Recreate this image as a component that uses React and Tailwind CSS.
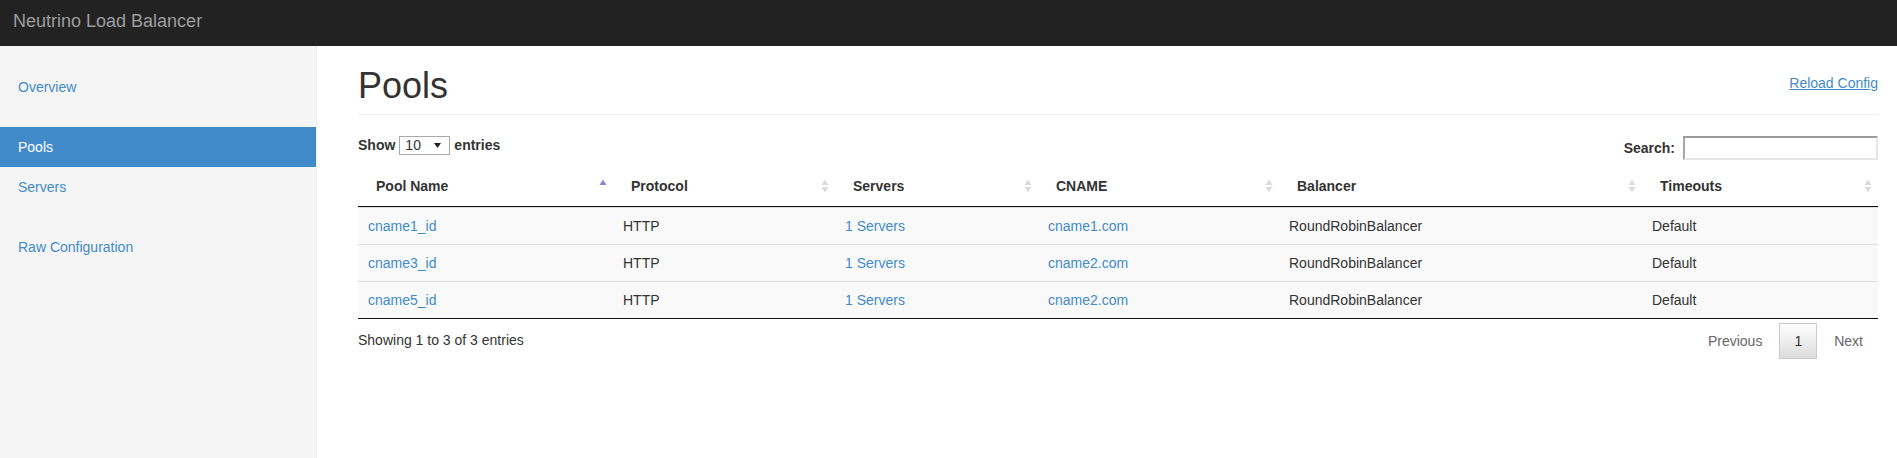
import React from "react";

const pools = [
  { name: "cname1_id", protocol: "HTTP", servers: "1 Servers", cname: "cname1.com", balancer: "RoundRobinBalancer", timeouts: "Default" },
  { name: "cname3_id", protocol: "HTTP", servers: "1 Servers", cname: "cname2.com", balancer: "RoundRobinBalancer", timeouts: "Default" },
  { name: "cname5_id", protocol: "HTTP", servers: "1 Servers", cname: "cname2.com", balancer: "RoundRobinBalancer", timeouts: "Default" },
];

const columns = [
  { label: "Pool Name", width: 255, sort: "asc" },
  { label: "Protocol", width: 222 },
  { label: "Servers", width: 203 },
  { label: "CNAME", width: 241 },
  { label: "Balancer", width: 363 },
  { label: "Timeouts", width: 236 },
];

// sort arrows drawn like the datatables png sprites
const SortIcon = ({ dir }) => (
  <svg width="8" height="14" viewBox="0 0 8 14" className="absolute right-[6px] top-[13px]">
    {dir === "asc" ? (
      <polygon points="4,0.5 7.5,6 0.5,6" fill="#8585d6" />
    ) : (
      <>
        <polygon points="4,0.5 7.5,6 0.5,6" fill="#dadada" />
        <polygon points="0.5,8 7.5,8 4,13.5" fill="#dadada" />
      </>
    )}
  </svg>
);

const SideLink = ({ children, active }) => (
  <a
    href="#"
    className={
      active
        ? "block px-[18px] py-[10px] leading-5 bg-[#428bca] text-white"
        : "block px-[18px] py-[10px] leading-5 text-[#428bca]"
    }
  >
    {children}
  </a>
);

export default function App() {
  return (
    <div className="h-screen flex flex-col text-[14px] text-[#333] bg-white" style={{ fontFamily: '"Liberation Sans", Arial, sans-serif' }}>
      {/* top navbar */}
      <div className="h-[46px] shrink-0 bg-[#222] pl-[13px] pt-[11px]">
        <span className="text-[18px] leading-5 text-[#9d9d9d]">Neutrino Load Balancer</span>
      </div>

      <div className="flex flex-1 min-h-0">
        {/* sidebar */}
        <div className="w-[317px] shrink-0 bg-[#f5f5f5] border-r border-[#eee] pt-[21px]">
          <div className="mb-5">
            <SideLink>Overview</SideLink>
          </div>
          <div className="mb-5">
            <SideLink active>Pools</SideLink>
            <SideLink>Servers</SideLink>
          </div>
          <div>
            <SideLink>Raw Configuration</SideLink>
          </div>
        </div>

        {/* main */}
        <div className="flex-1 pl-[41px] pr-[19px] pt-5">
          <div className="flex justify-between items-start pb-2 border-b border-[#eee] mb-5">
            <h1 className="text-[36px] leading-[40px] font-normal">Pools</h1>
            <a href="#" className="mt-[7px] leading-5 text-[#428bca] underline">Reload Config</a>
          </div>

          <div className="flex justify-between items-start h-[25px]">
            <div className="flex items-center h-5 font-bold">
              <span>Show</span>
              <div className="mx-[4px] w-[51px] h-[19px] border border-[#a9a9a9] bg-white flex items-center justify-between pl-[5px] pr-[8px] font-normal">
                <span className="leading-4">10</span>
                <svg width="7" height="5" viewBox="0 0 7 5">
                  <polygon points="0,0 7,0 3.5,5" fill="#222" />
                </svg>
              </div>
              <span>entries</span>
            </div>
            <div className="flex items-start font-bold">
              <span className="mt-[3px] leading-5">Search:</span>
              <input
                type="text"
                className="ml-[8px] mt-px w-[195px] h-[24px] bg-white border-2 border-t-[#9b9b9b] border-l-[#a6a6a6] border-r-[#e6e6e6] border-b-[#e6e6e6] outline-none"
              />
            </div>
          </div>

          <table className="mt-[6px] w-full table-fixed border-separate border-spacing-0">
            <colgroup>
              {columns.map((c) => (
                <col key={c.label} style={{ width: c.width }} />
              ))}
            </colgroup>
            <thead>
              <tr>
                {columns.map((c) => (
                  <th key={c.label} className="relative text-left font-bold pl-[18px] pr-[18px] py-[10px] leading-5 border-b border-[#111]">
                    {c.label}
                    <SortIcon dir={c.sort} />
                  </th>
                ))}
              </tr>
            </thead>
            <tbody>
              {pools.map((p) => (
                <tr key={p.name} className="bg-[#f9f9f9]">
                  <td className="px-[10px] py-[8px] leading-5 border-t border-[#ddd]">
                    <a href="#" className="text-[#428bca]">{p.name}</a>
                  </td>
                  <td className="px-[10px] py-[8px] leading-5 border-t border-[#ddd]">{p.protocol}</td>
                  <td className="px-[10px] py-[8px] leading-5 border-t border-[#ddd]">
                    <a href="#" className="text-[#428bca]">{p.servers}</a>
                  </td>
                  <td className="px-[10px] py-[8px] leading-5 border-t border-[#ddd]">
                    <a href="#" className="text-[#428bca]">{p.cname}</a>
                  </td>
                  <td className="px-[10px] py-[8px] leading-5 border-t border-[#ddd]">{p.balancer}</td>
                  <td className="px-[10px] py-[8px] leading-5 border-t border-[#ddd]">{p.timeouts}</td>
                </tr>
              ))}
            </tbody>
          </table>
          <div className="border-t border-[#111] flex justify-between items-start">
            <div className="pt-[11px] leading-5">Showing 1 to 3 of 3 entries</div>
            <div className="pt-[4px] flex leading-5">
              <span className="ml-[2px] px-[14px] py-[7px] border border-transparent text-[#666]">Previous</span>
              <span className="ml-[2px] px-[14px] py-[7px] border border-[#cacaca] bg-linear-to-b from-white to-[#dcdcdc] text-[#333]">1</span>
              <span className="ml-[2px] px-[14px] py-[7px] border border-transparent text-[#666]">Next</span>
            </div>
          </div>
        </div>
      </div>
    </div>
  );
}
